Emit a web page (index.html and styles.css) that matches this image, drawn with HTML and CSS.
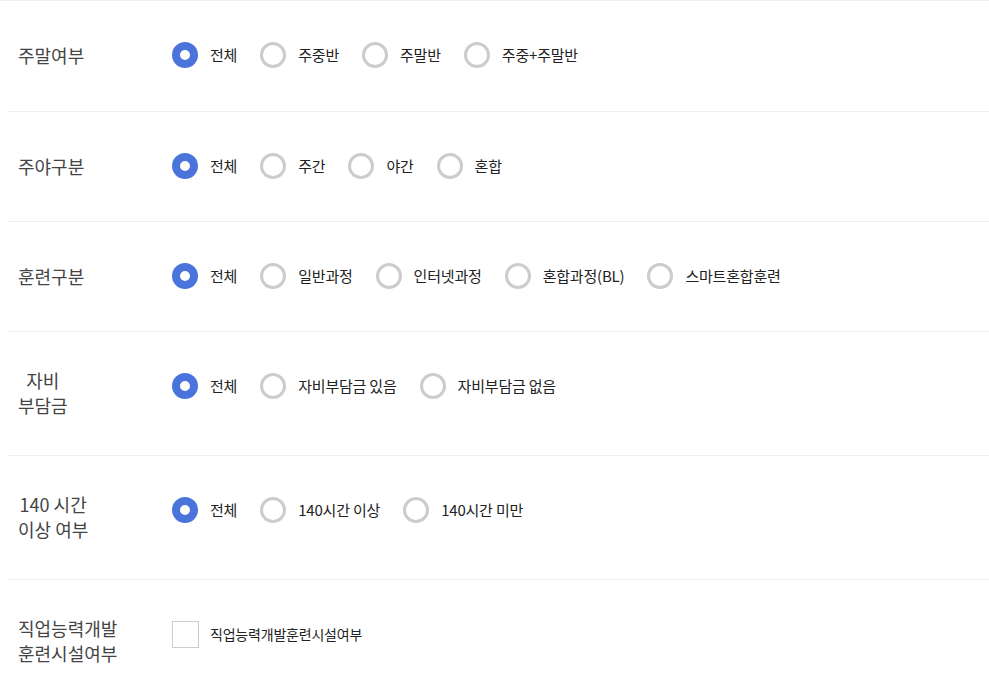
FILE: index.html
```html
<!DOCTYPE html>
<html>
<head>
	<title>훈련과정 검색</title>
	<meta charset="UTF-8">
	<link rel="stylesheet" href="styles.css">
</head>
<body>
	<div class="top_line"></div>
	<ul class="filter_list">
		<li class="filter_row">
			<div class="filter_title"><span>주말여부</span></div>
			<div class="filter_options">
				<label class="option"><input type="radio" name="weekend" checked><span>전체</span></label>
				<label class="option"><input type="radio" name="weekend"><span>주중반</span></label>
				<label class="option"><input type="radio" name="weekend"><span>주말반</span></label>
				<label class="option"><input type="radio" name="weekend"><span>주중+주말반</span></label>
			</div>
		</li>
		<li class="filter_row">
			<div class="filter_title"><span>주야구분</span></div>
			<div class="filter_options">
				<label class="option"><input type="radio" name="daynight" checked><span>전체</span></label>
				<label class="option"><input type="radio" name="daynight"><span>주간</span></label>
				<label class="option"><input type="radio" name="daynight"><span>야간</span></label>
				<label class="option"><input type="radio" name="daynight"><span>혼합</span></label>
			</div>
		</li>
		<li class="filter_row">
			<div class="filter_title"><span>훈련구분</span></div>
			<div class="filter_options">
				<label class="option"><input type="radio" name="training" checked><span>전체</span></label>
				<label class="option"><input type="radio" name="training"><span>일반과정</span></label>
				<label class="option"><input type="radio" name="training"><span>인터넷과정</span></label>
				<label class="option"><input type="radio" name="training"><span>혼합과정(BL)</span></label>
				<label class="option"><input type="radio" name="training"><span>스마트혼합훈련</span></label>
			</div>
		</li>
		<li class="filter_row">
			<div class="filter_title"><span>자비<br>부담금</span></div>
			<div class="filter_options">
				<label class="option"><input type="radio" name="cost" checked><span>전체</span></label>
				<label class="option"><input type="radio" name="cost"><span>자비부담금 있음</span></label>
				<label class="option"><input type="radio" name="cost"><span>자비부담금 없음</span></label>
			</div>
		</li>
		<li class="filter_row">
			<div class="filter_title"><span>140 시간<br>이상 여부</span></div>
			<div class="filter_options">
				<label class="option"><input type="radio" name="hours" checked><span>전체</span></label>
				<label class="option"><input type="radio" name="hours"><span>140시간 이상</span></label>
				<label class="option"><input type="radio" name="hours"><span>140시간 미만</span></label>
			</div>
		</li>
		<li class="filter_row">
			<div class="filter_title"><span>직업능력개발<br>훈련시설여부</span></div>
			<div class="filter_options">
				<label class="option small"><input type="checkbox" name="facility"><span>직업능력개발훈련시설여부</span></label>
			</div>
		</li>
	</ul>
</body>
</html>
```

FILE: styles.css
```css
body {
	margin: 0;
	background-color: #ffffff;
	font-family: "Noto Sans CJK KR", "Noto Sans", sans-serif;
	color: #222222;
}

.top_line {
	height: 1px;
	background-color: #eeeeee;
}

.filter_list {
	list-style: none;
	margin: 0 0 0 8px;
	padding: 0;
}

.filter_row {
	display: flex;
	align-items: flex-start;
	padding: 36px 0 37px 0;
	border-top: 1px solid #eeeeee;
}

.filter_row:first-child {
	border-top: none;
	padding-bottom: 38px;
}

.filter_title {
	width: 154px;
	padding-left: 10px;
	min-height: 36px;
	display: flex;
	align-items: center;
}

.filter_title span {
	display: inline-block;
	text-align: center;
	font-size: 18px;
	line-height: 25px;
	color: #444444;
}

.filter_options {
	display: flex;
	align-items: center;
	height: 36px;
}

.option {
	display: flex;
	align-items: center;
	margin-right: 23px;
	font-size: 15px;
	line-height: 20px;
	letter-spacing: -0.2px;
	cursor: pointer;
}

.option.small {
	font-size: 14px;
	letter-spacing: -0.2px;
}

.option input {
	-webkit-appearance: none;
	appearance: none;
	box-sizing: border-box;
	width: 26px;
	height: 26px;
	margin: 0 12px 0 0;
	background-color: #ffffff;
	border: 3px solid #cccccc;
	border-radius: 50%;
}

.option input:checked {
	border: 8px solid #4a74dc;
}

.option input[type="checkbox"] {
	border: 1px solid #cccccc;
	border-radius: 0;
	width: 27px;
	height: 27px;
	margin-right: 11px;
}
```
